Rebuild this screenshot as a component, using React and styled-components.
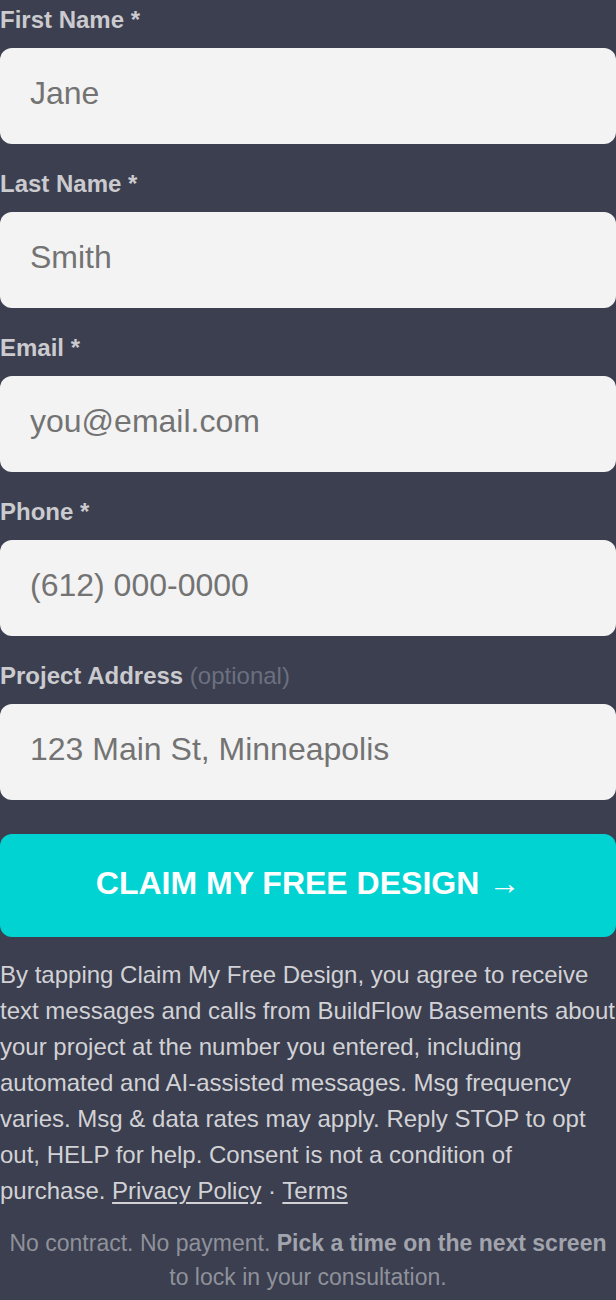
import React from "react";
import styled, { createGlobalStyle } from "styled-components";

const GlobalStyle = createGlobalStyle`
  html, body {
    margin: 0;
    padding: 0;
    background: #3b3f4f;
  }
  body {
    font-family: "Liberation Sans", Arial, sans-serif;
  }
  * { box-sizing: border-box; }
`;

const Page = styled.form`
  width: 616px;
  padding-top: 6px;
  padding-bottom: 20px;
  display: flex;
  flex-direction: column;
  background: #3b3f4f;
  font-family: "Liberation Sans", Arial, sans-serif;
`;

const Field = styled.div`
  display: flex;
  flex-direction: column;
  gap: 14px;
  & + & {
    margin-top: 26px;
  }
`;

const Label = styled.label`
  font-size: 24px;
  line-height: 28px;
  font-weight: 700;
  color: #cbcbcf;
`;

const Optional = styled.span`
  font-weight: 400;
  color: #6c7080;
`;

const Input = styled.input`
  width: 100%;
  height: 96px;
  border: none;
  outline: none;
  border-radius: 12px;
  background: #f3f3f3;
  padding: 0 30px 5px;
  font-family: "Liberation Sans", Arial, sans-serif;
  font-size: 32px;
  color: #333;
  &::placeholder {
    color: #737373;
    opacity: 1;
  }
`;

const Submit = styled.button`
  margin-top: 34px;
  width: 100%;
  height: 103px;
  border: none;
  border-radius: 12px;
  background: #00d3d2;
  color: #ffffff;
  padding: 0 0 4px;
  font-family: "Liberation Sans", Arial, sans-serif;
  font-size: 32px;
  font-weight: 700;
  cursor: pointer;
`;

const Arrow = styled.span`
  font-weight: 400;
`;

const Consent = styled.p`
  margin: 20px 0 0;
  font-size: 24px;
  line-height: 36px;
  color: #d2d2d6;
`;

const Link = styled.a`
  color: #d2d2d6;
  text-decoration: underline;
  text-underline-offset: 3px;
`;

const Note = styled.p`
  margin: 17px 0 0;
  font-size: 23px;
  line-height: 34px;
  text-align: center;
  color: #8f919b;
  strong {
    font-weight: 700;
    color: #a2a4ad;
  }
`;

const fields = [
  { id: "first", label: "First Name *", placeholder: "Jane", type: "text" },
  { id: "last", label: "Last Name *", placeholder: "Smith", type: "text" },
  { id: "email", label: "Email *", placeholder: "you@email.com", type: "email" },
  { id: "phone", label: "Phone *", placeholder: "(612) 000-0000", type: "tel" },
  {
    id: "address",
    label: "Project Address",
    optional: true,
    placeholder: "123 Main St, Minneapolis",
    type: "text",
  },
];

export default function App() {
  return (
    <>
      <GlobalStyle />
      <Page onSubmit={(e) => e.preventDefault()}>
        {fields.map((f) => (
          <Field key={f.id}>
            <Label htmlFor={f.id}>
              {f.label}
              {f.optional && <Optional> (optional)</Optional>}
            </Label>
            <Input id={f.id} type={f.type} placeholder={f.placeholder} />
          </Field>
        ))}
        <Submit type="submit">
          CLAIM MY FREE DESIGN<Arrow> →</Arrow>
        </Submit>
        <Consent>
          By tapping Claim My Free Design, you agree to receive text messages
          and calls from BuildFlow Basements about your project at the number
          you entered, including automated and AI-assisted messages. Msg
          frequency varies. Msg &amp; data rates may apply. Reply STOP to opt
          out, HELP for help. Consent is not a condition of purchase.{" "}
          <Link href="#">Privacy Policy</Link> · <Link href="#">Terms</Link>
        </Consent>
        <Note>
          No contract. No payment. <strong>Pick a time on the next screen</strong>{" "}
          to lock in your consultation.
        </Note>
      </Page>
    </>
  );
}
